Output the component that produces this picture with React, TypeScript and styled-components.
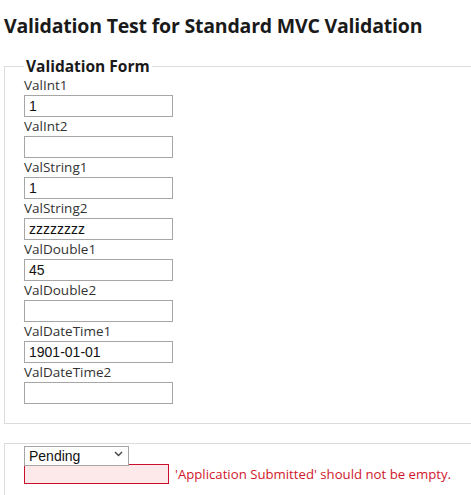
import React from 'react';
import styled, { createGlobalStyle } from 'styled-components';

const GlobalStyle = createGlobalStyle`
  html, body {
    margin: 0;
    padding: 0;
    background: #ffffff;
    overflow: hidden;
  }
  body {
    font-family: 'Open Sans', 'Noto Sans', sans-serif;
    color: #222222;
  }
`;

const Page = styled.div`
  width: 471px;
  height: 495px;
  overflow: hidden;
  padding-left: 4px;
  box-sizing: border-box;
`;

const Title = styled.h2`
  margin: 12px 0 0 0;
  font-size: 19.5px;
  line-height: 28px;
  font-weight: 700;
  color: #1a1a1a;
  letter-spacing: -0.2px;
`;

const Fieldset = styled.fieldset<{ $top: number; $bottom: number }>`
  margin: ${(p) => p.$top}px -40px 0 0;
  padding: 0 0 ${(p) => p.$bottom}px 19px;
  border: 1px solid #dcdcdc;
  min-width: 0;
`;

const Legend = styled.legend`
  padding: 0 2px;
  margin-left: 0;
  font-size: 15.5px;
  line-height: 20px;
  font-weight: 700;
  color: #1a1a1a;
`;

const Field = styled.div`
  display: flex;
  flex-direction: column;
  align-items: flex-start;
`;

const Label = styled.label`
  font-size: 13.5px;
  line-height: 19px;
  color: #333333;
`;

const TextInput = styled.input`
  box-sizing: border-box;
  width: 149px;
  height: 22px;
  margin: 0;
  padding: 0 4px;
  border: 1px solid #a6a6a6;
  border-radius: 0;
  font-family: 'Liberation Sans', Arial, sans-serif;
  font-size: 14px;
  color: #111111;
  background: #ffffff;
  outline: none;
`;

const SelectWrap = styled.div`
  position: relative;
  width: 105px;
  height: 20px;
`;

const Select = styled.select`
  appearance: none;
  box-sizing: border-box;
  width: 105px;
  height: 20px;
  margin: 0;
  padding: 0 0 0 4px;
  border: 1px solid #a6a6a6;
  border-radius: 0;
  background: #ffffff;
  font-family: 'Liberation Sans', Arial, sans-serif;
  font-size: 14px;
  color: #111111;
  outline: none;
`;

const Chevron = styled.svg`
  position: absolute;
  right: 6px;
  top: 7px;
  pointer-events: none;
`;

const ErrorRow = styled.div`
  display: flex;
  align-items: center;
  gap: 6px;
`;

const ErrorInput = styled(TextInput)`
  width: 145px;
  height: 20px;
  border-color: #c8102e;
  background: #fde9ea;
`;

const ErrorText = styled.span`
  font-size: 13.2px;
  line-height: 19px;
  color: #d1172c;
  white-space: nowrap;
`;

const fields: [string, string][] = [
  ['ValInt1', '1'],
  ['ValInt2', ''],
  ['ValString1', '1'],
  ['ValString2', 'zzzzzzzz'],
  ['ValDouble1', '45'],
  ['ValDouble2', ''],
  ['ValDateTime1', '1901-01-01'],
  ['ValDateTime2', ''],
];

export default function App() {
  return (
    <Page>
      <GlobalStyle />
      <Title>Validation Test for Standard MVC Validation</Title>
      <Fieldset $top={16} $bottom={19}>
        <Legend>Validation Form</Legend>
        {fields.map(([name, value]) => (
          <Field key={name}>
            <Label htmlFor={name}>{name}</Label>
            <TextInput id={name} defaultValue={value} />
          </Field>
        ))}
      </Fieldset>
      <Fieldset $top={19} $bottom={20}>
        <SelectWrap>
          <Select defaultValue="Pending">
            <option>Pending</option>
            <option>Approved</option>
            <option>Rejected</option>
          </Select>
          <Chevron width="9" height="6" viewBox="0 0 9 6">
            <path d="M1 1 L4.5 4.5 L8 1" fill="none" stroke="#444" strokeWidth="1.4" />
          </Chevron>
        </SelectWrap>
        <ErrorRow>
          <ErrorInput />
          <ErrorText>'Application Submitted' should not be empty.</ErrorText>
        </ErrorRow>
      </Fieldset>
    </Page>
  );
}
